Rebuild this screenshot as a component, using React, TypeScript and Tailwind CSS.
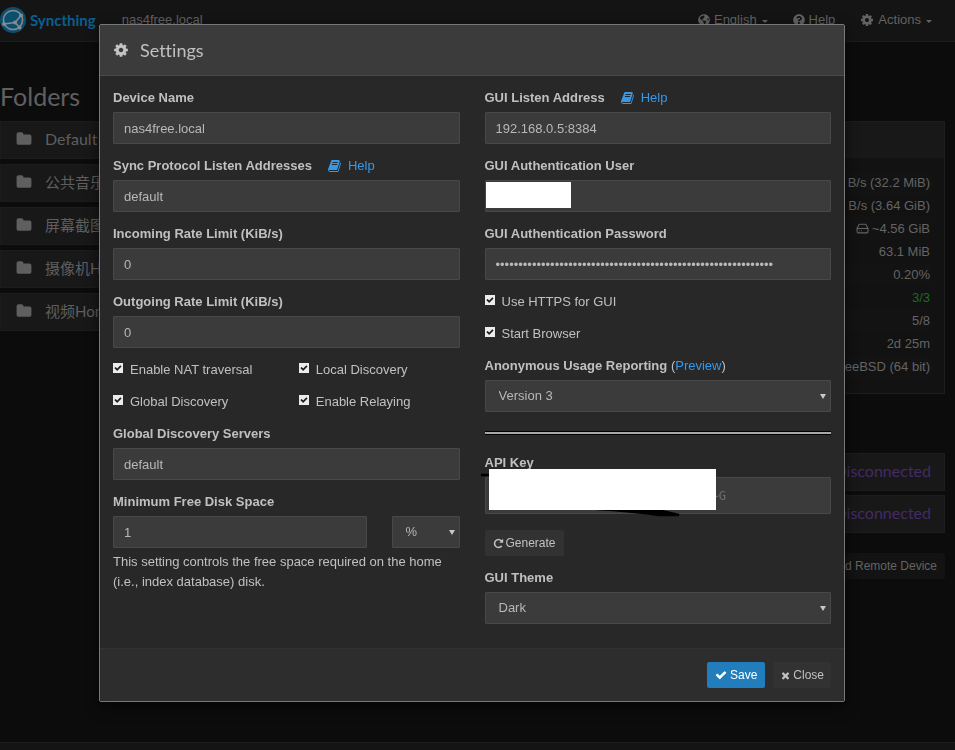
import React, { useId } from "react";
import { HardDrive } from "lucide-react";
import { FaGlobeAmericas, FaQuestionCircle } from "react-icons/fa";

const GLYPHS = {
  book: "M1639 478q40 57 18 129l-275 906q-19 64-76.500 107.500t-122.500 43.500h-923q-77 0-148.500-53.500t-99.500-131.500q-24-67-2-127 0-4 3-27t4-37q1-8-3-21.500t-3-19.500q2-11 8-21t16.500-23.500 16.500-23.500q23-38 45-91.500t30-91.500q3-10 .5-30t-.5-28q3-11 17-28t17-23q21-36 42-92t25-90q1-9-2.500-32t.5-28q4-13 22-30.500t22-22.500q19-26 42.500-84.500t27.500-96.500q1-8-3-25.500t-2-26.500q2-8 9-18t18-23 17-21q8-12 16.500-30.500t15-35 16-36 19.500-32 26.500-23.500 36-11.500 47.500 5.500l-1 3q38-9 51-9h761q74 0 114 56t18 130l-274 906q-36 119-71.500 153.500t-128.500 34.500h-869q-27 0-38 15-11 16-1 43 24 70 144 70h923q29 0 56-15.500t35-41.500l300-987q7-22 5-57 38 15 59 43zm-1064 2q-4 13 2 22.500t20 9.500h608q13 0 25.500-9.500t16.500-22.500l21-64q4-13-2-22.500t-20-9.500h-608q-13 0-25.500 9.500t-16.500 22.500zm-83 256q-4 13 2 22.500t20 9.500h608q13 0 25.500-9.500t16.500-22.500l21-64q4-13-2-22.500t-20-9.500h-608q-13 0-25.500 9.500t-16.500 22.500z",
  check: "M1671 566q0 40-28 68l-724 724-136 136q-28 28-68 28t-68-28l-136-136-362-362q-28-28-28-68t28-68l136-136q28-28 68-28t68 28l294 295 656-657q28-28 68-28t68 28l136 136q28 28 28 68z",
  times: "M1490 1322q0 40-28 68l-136 136q-28 28-68 28t-68-28l-294-294-294 294q-28 28-68 28t-68-28l-136-136q-28-28-28-68t28-68l294-294-294-294q-28-28-28-68t28-68l136-136q28-28 68-28t68 28l294 294 294-294q28-28 68-28t68 28l136 136q28 28 28 68t-28 68l-294 294 294 294q28 28 28 68z",
  cog: "M1152 896q0-106-75-181t-181-75-181 75-75 181 75 181 181 75 181-75 75-181zm512-109v222q0 12-8 23t-20 13l-185 28q-19 54-39 91 35 50 107 138 10 12 10 25t-9 23q-27 37-99 108t-94 71q-12 0-26-9l-138-108q-44 23-91 38-16 136-29 186-7 28-36 28h-222q-14 0-24.500-8.500t-11.500-21.500l-28-184q-49-16-90-37l-141 107q-10 9-25 9-14 0-25-11-126-114-165-168-7-10-7-23 0-12 8-23 15-21 51-66.500t54-70.500q-27-50-41-99l-183-27q-13-2-21-12.500t-8-23.500v-222q0-12 8-23t19-13l186-28q14-46 39-92-40-57-107-138-10-12-10-24 0-10 9-23 26-36 98.500-107.500t94.500-71.500q13 0 26 10l138 107q44-23 91-38 16-136 29-186 7-28 36-28h222q14 0 24.500 8.500t11.500 21.500l28 184q49 16 90 37l142-107q9-9 24-9 13 0 25 10 129 119 165 170 7 8 7 22 0 12-8 23-15 21-51 66.500t-54 70.500q26 50 41 98l183 28q13 2 21 12.500t8 23.500z",
  repeat: "M1664 256v448q0 26-19 45t-45 19h-448q-42 0-59-40-17-39 14-69l138-138q-148-137-349-137-104 0-198.500 40.500t-163.500 109.500-109.500 163.500-40.500 198.500 40.500 198.500 109.500 163.500 163.500 109.500 198.500 40.500q119 0 225-52t179-147q7-10 23-12 15 0 25 9l137 138q9 8 9.500 20.500t-7.500 22.500q-109 132-264 204.500t-327 72.500q-156 0-298-61t-245-164-164-245-61-298 61-298 164-245 245-164 298-61q147 0 284.500 55.500t244.500 156.500l130-129q29-31 70-14 39 17 39 59z",
  folder: "M1728 608v704q0 92-66 158t-158 66h-1216q-92 0-158-66t-66-158v-960q0-92 66-158t158-66h320q92 0 158 66t66 158v32h672q92 0 158 66t66 158z",
};

function Glyph({ name, className }: { name: keyof typeof GLYPHS; className: string }) {
  return (
    <svg viewBox="0 0 1792 1792" fill="currentColor" aria-hidden="true" className={className}>
      <path d={GLYPHS[name]} />
    </svg>
  );
}

function Logo() {
  return (
    <svg viewBox="0 0 26 26" className="size-[26px] shrink-0" aria-hidden="true">
      <circle cx="13" cy="13" r="13" fill="#0b4f70" />
      <g fill="none" stroke="#8a8a8a" strokeWidth="1.5">
        <circle cx="13" cy="13" r="9.600" />
        <path d="M15 15.500 21 8.500M15 15.500 4 17M15 15.500 19.500 20.500" />
      </g>
      <g fill="#8a8a8a">
        <circle cx="15" cy="15.500" r="2" />
        <circle cx="21" cy="8.500" r="2" />
        <circle cx="4" cy="17" r="2" />
        <circle cx="19.500" cy="20.500" r="2" />
      </g>
    </svg>
  );
}

function Caret() {
  return <span className="ml-[1px] mt-[3px] border-x-[3px] border-t-[3px] border-x-transparent border-t-current" />;
}

function NavBar() {
  return (
    <nav className="flex h-[42px] items-center border-b border-[#1d1d1d] bg-[#141414] pb-[1px] pr-[23px] text-[#626262]">
      <a href="#home" className="flex items-center gap-1 font-['Lato',sans-serif] text-[15px] font-bold text-[#0b5f8c]">
        <Logo />
        Syncthing
      </a>
      <span className="ml-[26px] flex-1">nas4free.local</span>
      <div className="flex items-center gap-[25px]">
        <button type="button" className="flex items-center gap-1">
          <FaGlobeAmericas className="size-3" />
          English
          <Caret />
        </button>
        <a href="#help" className="flex items-center gap-1">
          <FaQuestionCircle className="size-3" />
          Help
        </a>
        <button type="button" className="flex items-center gap-1">
          <Glyph name="cog" className="size-[14px]" />
          Actions
          <Caret />
        </button>
      </div>
    </nav>
  );
}

const folders = ["Default", "公共音乐", "屏幕截图", "摄像机Home", "视频Home"];

function FolderList() {
  return (
    <section className="flex flex-col gap-[5px]">
      {folders.map((name) => (
        <button
          key={name}
          type="button"
          className="flex h-[38px] items-center gap-[13px] border border-[#1c1c1c] bg-[#181818] pb-[2px] pl-[15px] font-['Lato','Noto_Sans_CJK_SC',sans-serif] text-[15px] text-[#5f5f5f] first:text-base"
        >
          <Glyph name="folder" className="size-4" />
          {name}
        </button>
      ))}
    </section>
  );
}

const stats = [
  { text: "B/s (32.2 MiB)" },
  { text: "B/s (3.64 GiB)" },
  { text: "~4.56 GiB", disk: true },
  { text: "63.1 MiB" },
  { text: "0.20%" },
  { text: "3/3", ok: true },
  { text: "5/8" },
  { text: "2d 25m" },
  { text: "FreeBSD (64 bit)" },
];

function DevicePanel() {
  return (
    <section className="flex flex-col">
      <div className="border border-[#1d1d1d] bg-[#121212]">
        <div className="h-9 border-b border-[#1a1a1a] bg-[#181818]" />
        <ul className="pb-[15px] pt-[13px]">
          {stats.map((row) => (
            <li
              key={row.text}
              className={`mx-[14px] flex h-[23px] items-center justify-end gap-[3px] odd:bg-[#131313] ${row.ok ? "text-[#1d6b24]" : "text-[#646464]"}`}
            >
              {row.disk && <HardDrive className="size-[13px]" />}
              {row.text}
            </li>
          ))}
        </ul>
      </div>
      <div className="mt-[59px] flex flex-col gap-1">
        {[1, 2].map((n) => (
          <button
            key={n}
            type="button"
            className="flex h-[38px] items-center justify-end border border-[#1d1d1d] bg-[#181818] pb-[2px] pr-[13px] font-['Lato',sans-serif] text-base text-[#432b64]"
          >
            Disconnected
          </button>
        ))}
      </div>
      <button
        type="button"
        className="mt-5 h-[26px] self-end rounded-[2px] bg-[#131313] px-2 text-[12px] text-[#636363]"
      >
        Add Remote Device
      </button>
    </section>
  );
}

const fieldBox =
  "block w-full rounded-[1px] border border-[#484848] bg-[#3b3b3b] text-[#b8b8b8] outline-none";

function HelpLink() {
  return (
    <a href="#docs" className="ml-4 flex items-center gap-[6px] font-normal text-[#3498eb]">
      <Glyph name="book" className="size-[14px]" />
      Help
    </a>
  );
}

function Field(props: {
  label: string;
  value: string;
  type?: string;
  help?: boolean;
  children?: React.ReactNode;
}) {
  const id = useId();
  return (
    <div className="flex flex-col gap-1">
      <div className="flex items-center">
        <label htmlFor={id} className="font-bold">
          {props.label}
        </label>
        {props.help && <HelpLink />}
      </div>
      <div className="relative">
        <input
          id={id}
          type={props.type ?? "text"}
          defaultValue={props.value}
          className={`${fieldBox} h-8 px-[10px]`}
        />
        {props.children}
      </div>
    </div>
  );
}

function Select({ id, label, value }: { id: string; label?: string; value: string }) {
  return (
    <div className="relative">
      <select id={id} aria-label={label} className={`${fieldBox} h-8 appearance-none px-[13px]`}>
        <option>{value}</option>
      </select>
      <span className="pointer-events-none absolute right-[5px] top-[14px] border-x-[3px] border-t-[5px] border-x-transparent border-t-[#c8c8c8]" />
    </div>
  );
}

function Tick({ label }: { label: string }) {
  return (
    <label className="flex items-center gap-[6px]">
      <span className="relative mb-[3px] size-[11px]">
        <input type="checkbox" defaultChecked className="block size-[10px] appearance-none bg-[#ececec]" />
        <Glyph name="check" className="pointer-events-none absolute left-[1px] top-[1px] size-2 text-[#1d1d1d]" />
      </span>
      {label}
    </label>
  );
}

function LeftColumn() {
  return (
    <div className="flex flex-col gap-3">
      <Field label="Device Name" value="nas4free.local" />
      <Field label="Sync Protocol Listen Addresses" value="default" help />
      <Field label="Incoming Rate Limit (KiB/s)" value="0" />
      <Field label="Outgoing Rate Limit (KiB/s)" value="0" />
      <div className="grid grid-cols-2 gap-x-[25px] gap-y-3">
        <Tick label="Enable NAT traversal" />
        <Tick label="Local Discovery" />
        <Tick label="Global Discovery" />
        <Tick label="Enable Relaying" />
      </div>
      <Field label="Global Discovery Servers" value="default" />
      <div className="flex flex-col gap-1">
        <label htmlFor="min-free" className="font-bold">
          Minimum Free Disk Space
        </label>
        <div className="flex gap-[25px]">
          <input id="min-free" type="text" defaultValue="1" className={`${fieldBox} h-8 flex-1 px-[10px]`} />
          <div className="w-[68px]">
            <Select id="min-free-unit" label="Unit" value="%" />
          </div>
        </div>
        <p>This setting controls the free space required on the home (i.e., index database) disk.</p>
      </div>
    </div>
  );
}

function ApiKey() {
  return (
    <div className="relative flex flex-col gap-1">
      <label htmlFor="api-key" className="font-bold">
        API Key
      </label>
      <input
        id="api-key"
        type="text"
        readOnly
        value="~G"
        className="block h-[37px] w-full rounded-[1px] border border-[#484848] bg-[#3b3b3b] pl-[226px] font-['DejaVu_Sans_Mono',monospace] text-[12px] text-[#6c6c6c] outline-none"
      />
      <svg viewBox="0 0 210 60" className="absolute -left-1 top-2 h-[60px] w-[210px]" aria-hidden="true">
        <path d="M0 14H20" stroke="#000" strokeWidth="2.500" />
        <path d="M115 48Q150 50 178 54L198 54 176 49" fill="#000" stroke="#000" strokeWidth="2.500" />
      </svg>
      <div className="absolute left-1 top-4 h-[41px] w-[227px] bg-white" />
    </div>
  );
}

function RightColumn() {
  return (
    <div className="flex flex-col gap-3">
      <Field label="GUI Listen Address" value="192.168.0.5:8384" help />
      <Field label="GUI Authentication User" value="">
        <div className="absolute left-[1px] top-[2px] h-[26px] w-[85px] bg-white" />
      </Field>
      <Field label="GUI Authentication Password" value={"x".repeat(61)} type="password" />
      <Tick label="Use HTTPS for GUI" />
      <Tick label="Start Browser" />
      <div className="flex flex-col gap-1">
        <div>
          <label htmlFor="usage" className="font-bold">
            Anonymous Usage Reporting
          </label>{" "}
          (
          <a href="#preview" className="text-[#3498eb]">
            Preview
          </a>
          )
        </div>
        <Select id="usage" value="Version 3" />
      </div>
      <hr className="mb-[6px] mt-[7px] h-1 border-y border-black bg-[#a8a8a8]" />
      <ApiKey />
      <button
        type="button"
        className="mt-1 flex h-[26px] items-center gap-[2px] self-start rounded-[2px] bg-[#323232] px-2 text-[12px]"
      >
        <Glyph name="repeat" className="size-[11px]" />
        Generate
      </button>
      <div className="flex flex-col gap-1">
        <label htmlFor="theme" className="font-bold">
          GUI Theme
        </label>
        <Select id="theme" value="Dark" />
      </div>
    </div>
  );
}

function SettingsDialog() {
  return (
    <div className="fixed inset-0 flex items-start justify-center pr-[11px] pt-6">
      <div
        role="dialog"
        aria-labelledby="settings-title"
        className="w-full max-w-[746px] rounded-[2px] border border-[#787878] bg-[#282828] shadow-[0_5px_14px_rgba(0,0,0,0.6)]"
      >
        <header className="flex h-[51px] items-center gap-[11px] border-b border-[#4a4a4a] bg-[#3b3b3b] px-[13px]">
          <Glyph name="cog" className="size-4 text-[#c4c4c4]" />
          <h1 id="settings-title" className="font-['Lato',sans-serif] text-[18px] [font-variant-ligatures:none]">
            Settings
          </h1>
        </header>
        <div className="grid grid-cols-2 gap-[25px] px-[13px] pb-6 pt-3">
          <LeftColumn />
          <RightColumn />
        </div>
        <footer className="flex justify-end gap-2 border-t border-[#323232] bg-[#2d2d2d] p-[13px] text-[12px]">
          <button
            type="submit"
            className="flex h-[26px] items-center gap-[3px] rounded-[2px] bg-[#217dbb] px-2 text-white"
          >
            <Glyph name="check" className="size-3" />
            Save
          </button>
          <button type="button" className="flex h-[26px] items-center gap-[2px] rounded-[2px] bg-[#323232] px-[7px]">
            <Glyph name="times" className="size-[11px]" />
            Close
          </button>
        </footer>
      </div>
    </div>
  );
}

export default function App() {
  return (
    <div className="flex min-h-screen flex-col bg-[#0c0c0c] font-['Liberation_Sans',Arial,sans-serif] text-[13px] leading-5 text-[#c0c0c0]">
      <NavBar />
      <main className="flex-1 pr-[10px]">
        <h2 className="pb-[10px] pt-[39px] font-['Lato',sans-serif] text-[25px] leading-[30px] text-[#606060]">
          Folders
        </h2>
        <div className="grid grid-cols-2 items-start gap-6">
          <FolderList />
          <DevicePanel />
        </div>
      </main>
      <div className="h-2 border-t border-[#1d1d1d] bg-[#141414]" />
      <SettingsDialog />
    </div>
  );
}
